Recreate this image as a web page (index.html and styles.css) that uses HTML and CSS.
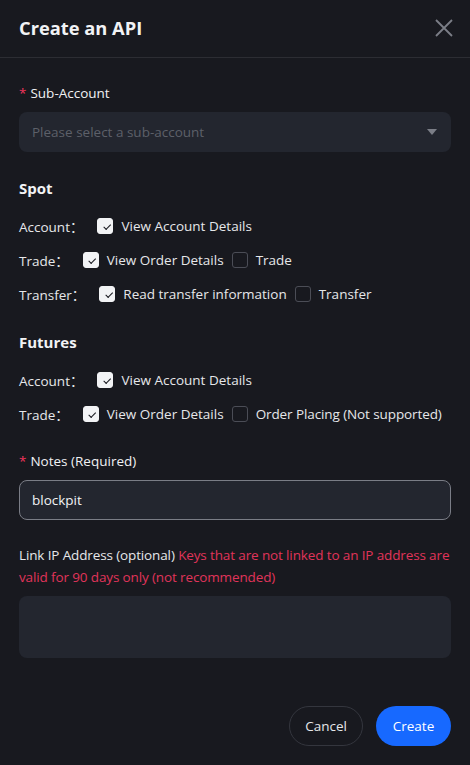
FILE: index.html
```html
<!DOCTYPE html>
<html>
<head>
<meta charset="utf-8">
<link rel="stylesheet" href="styles.css">
</head>
<body>
<div class="modal">
  <div class="header">
    <h1 class="title">Create an API</h1>
    <svg class="close" width="18" height="18" viewBox="0 0 18 18"><path d="M1 1L17 17M17 1L1 17" stroke="#7b7e87" stroke-width="1.8" fill="none"/></svg>
  </div>
  <div class="body">
    <div class="label"><span class="req">*</span>Sub-Account</div>
    <div class="select">
      <span class="placeholder">Please select a sub-account</span>
      <svg class="caret" width="10" height="6" viewBox="0 0 10 6"><path d="M0 0H10L5 6Z" fill="#7b7e87"/></svg>
    </div>

    <div class="section">Spot</div>
    <div class="perm"><span class="plabel">Account：</span><span class="cb on"></span><span class="ctext">View Account Details</span></div>
    <div class="perm"><span class="plabel">Trade：</span><span class="cb on"></span><span class="ctext">View Order Details</span><span class="cb"></span><span class="ctext">Trade</span></div>
    <div class="perm"><span class="plabel">Transfer：</span><span class="cb on"></span><span class="ctext">Read transfer information</span><span class="cb"></span><span class="ctext">Transfer</span></div>

    <div class="section futures">Futures</div>
    <div class="perm"><span class="plabel">Account：</span><span class="cb on"></span><span class="ctext">View Account Details</span></div>
    <div class="perm"><span class="plabel">Trade：</span><span class="cb on"></span><span class="ctext">View Order Details</span><span class="cb"></span><span class="ctext tight">Order Placing (Not supported)</span></div>

    <div class="label notes"><span class="req">*</span>Notes (Required)</div>
    <div class="input">blockpit</div>

    <p class="iplabel">Link IP Address (optional) <span class="warn">Keys that are not linked to an IP address are valid for 90 days only (not recommended)</span></p>
    <div class="textarea"></div>
  </div>
  <div class="footer">
    <button class="btn cancel">Cancel</button>
    <button class="btn create">Create</button>
  </div>
</div>
</body>
</html>
```
FILE: styles.css
```css
* { box-sizing: border-box; }
html, body { margin: 0; padding: 0; }
body {
  background: #18191f;
  color: #e6e7ea;
  font-family: "Open Sans", "Noto Sans", "Noto Sans CJK SC", sans-serif;
  font-size: 13.5px;
  width: 470px;
  height: 765px;
}
.modal { display: flex; flex-direction: column; height: 765px; }
.header {
  display: flex; align-items: center; justify-content: space-between;
  height: 58px; padding: 0 17px 2px 19px;
  border-bottom: 1px solid #2c2d33;
}
.title { margin: 0; font-size: 18.3px; font-weight: 700; color: #f2f3f5; }
.close { display: block; }
.body { padding: 24px 19px 0 19px; flex: 1; }
.label { font-size: 13.5px; line-height: 22px; color: #f0f1f3; }
.req { color: #f0355c; margin-right: 4px; }
.select {
  margin-top: 8px; height: 40px; border-radius: 8px; background: #23262f;
  display: flex; align-items: center; justify-content: space-between;
  padding: 0 14px 0 13px;
}
.placeholder { color: #5d6069; font-size: 13.5px; }
.section { font-size: 15px; font-weight: 700; color: #f2f3f5; margin-top: 24px; line-height: 24px; margin-bottom: 9px; }
.section.futures { margin-top: 19px; }
.perm { display: flex; align-items: center; height: 34px; font-size: 13.5px; color: #e6e7ea; white-space: nowrap; }
.plabel { margin-right: 14px; }
.cb {
  width: 16px; height: 16px; border-radius: 3px; border: 1px solid #4b4d56;
  flex: none; margin-right: 8px; position: relative;
}
.cb.on { background: #f2f3f5; border-color: #f2f3f5; }
.cb.on::after {
  content: ""; position: absolute; left: 4.5px; top: 2.5px; width: 6px; height: 3px;
  border-left: 1.5px solid #18191f; border-bottom: 1.5px solid #18191f;
  transform: rotate(-45deg) translate(-1px, 2px);
}
.ctext { margin-right: 8px; }
.ctext.tight { margin-right: 0; letter-spacing: -0.1px; }
.notes { margin-top: 19px; }
.input {
  margin-top: 8px; height: 40px; border-radius: 8px; background: #23262f;
  border: 1px solid #7a7d86; padding: 0 12px; display: flex; align-items: center;
  color: #f2f3f5; font-size: 13.5px;
}
.iplabel { margin: 24px 0 0 0; line-height: 22px; font-size: 13.5px; color: #e6e7ea; letter-spacing: -0.13px; }
.warn { color: #e0345a; }
.textarea { margin-top: 8px; height: 62px; border-radius: 8px; background: #23262f; }
.footer { display: flex; justify-content: flex-end; gap: 13px; padding: 0 19px 19px 19px; }
.btn {
  height: 40px; border-radius: 20px; font-family: inherit; font-size: 13.5px;
  padding: 0 12px; cursor: pointer;
}
.cancel { background: transparent; border: 1px solid #34363e; color: #e6e7ea; width: 74px; }
.create { background: #1769ff; border: none; color: #ffffff; width: 75px; }
```
